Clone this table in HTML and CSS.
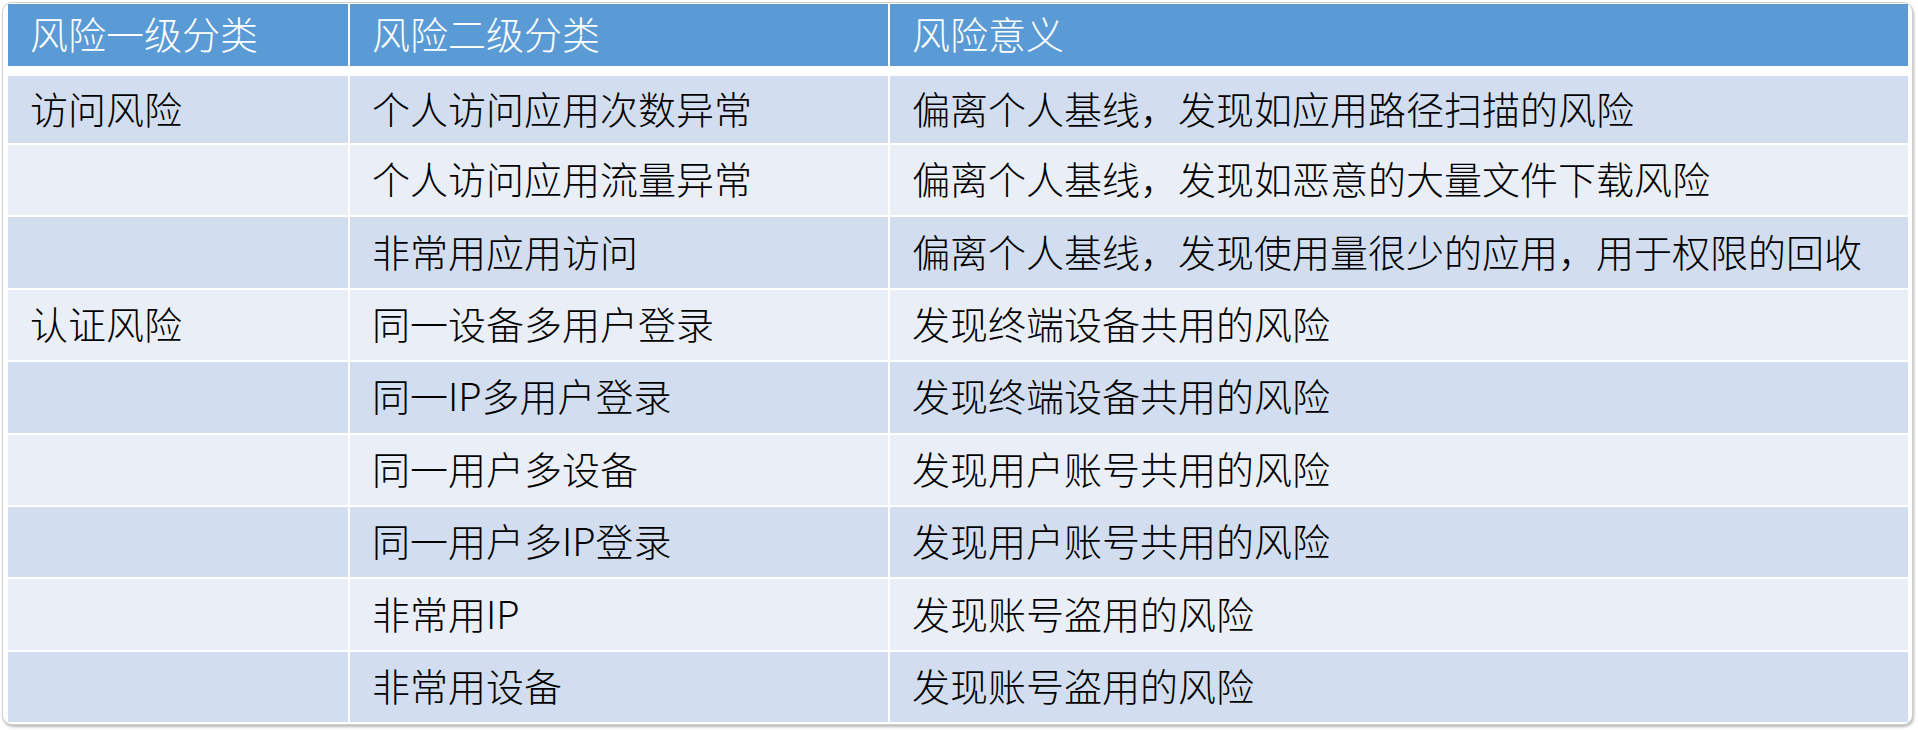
FILE: index.html
```html
<!DOCTYPE html>
<html lang="zh-CN">
<head>
<meta charset="utf-8">
<title>风险分类</title>
<link rel="stylesheet" href="styles.css">
</head>
<body>
<div class="frame">
  <div class="grid">
    <div class="cell head">风险一级分类</div>
    <div class="cell head">风险二级分类</div>
    <div class="cell head">风险意义</div>

    <div class="cell odd">访问风险</div>
    <div class="cell odd">个人访问应用次数异常</div>
    <div class="cell odd">偏离个人基线，发现如应用路径扫描的风险</div>

    <div class="cell even"></div>
    <div class="cell even">个人访问应用流量异常</div>
    <div class="cell even">偏离个人基线，发现如恶意的大量文件下载风险</div>

    <div class="cell odd"></div>
    <div class="cell odd">非常用应用访问</div>
    <div class="cell odd">偏离个人基线，发现使用量很少的应用，用于权限的回收</div>

    <div class="cell even">认证风险</div>
    <div class="cell even">同一设备多用户登录</div>
    <div class="cell even">发现终端设备共用的风险</div>

    <div class="cell odd"></div>
    <div class="cell odd">同一IP多用户登录</div>
    <div class="cell odd">发现终端设备共用的风险</div>

    <div class="cell even"></div>
    <div class="cell even">同一用户多设备</div>
    <div class="cell even">发现用户账号共用的风险</div>

    <div class="cell odd"></div>
    <div class="cell odd">同一用户多IP登录</div>
    <div class="cell odd">发现用户账号共用的风险</div>

    <div class="cell even"></div>
    <div class="cell even">非常用IP</div>
    <div class="cell even">发现账号盗用的风险</div>

    <div class="cell odd"></div>
    <div class="cell odd">非常用设备</div>
    <div class="cell odd">发现账号盗用的风险</div>
  </div>
</div>
</body>
</html>
```

FILE: styles.css
```css
html, body {
  margin: 0;
  padding: 0;
  background: #ffffff;
}

body {
  width: 1918px;
  height: 730px;
  overflow: hidden;
  font-family: "Noto Sans CJK SC", "Noto Sans", sans-serif;
}

.frame {
  box-sizing: border-box;
  margin: 2px 0 0 2px;
  width: 1911px;
  height: 723px;
  padding: 1px 2px 0 5px;
  border: 1px solid #cfcfcf;
  border-radius: 10px;
  box-shadow: 1px 2px 3px rgba(0, 0, 0, 0.28);
  background: #ffffff;
}

.grid {
  display: grid;
  width: 1900px;
  grid-template-columns: 340px 538px 1fr;
  grid-template-rows: 70px 67px repeat(8, 70.4px);
  column-gap: 2px;
  row-gap: 2px;
  background: #ffffff;
}

.cell {
  box-sizing: border-box;
  display: flex;
  align-items: center;
  padding: 0 0 4px 22px;
  font-size: 38px;
  font-weight: 300;
  color: #000000;
  white-space: nowrap;
  line-height: 1;
}

.head {
  background: #5b9bd5;
  background-clip: padding-box;
  color: #ffffff;
  border-bottom: 8px solid #ffffff;
}

.odd {
  background: #d2deef;
}

.even {
  background: #eaeff7;
}
```
